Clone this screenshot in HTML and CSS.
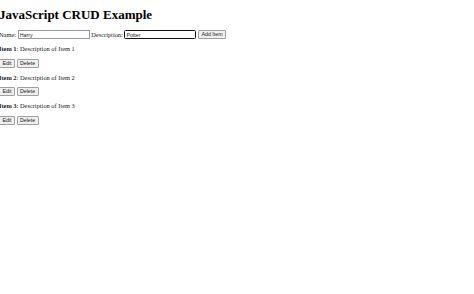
FILE: index.html
```html
<!DOCTYPE html>
<html>
<head>
<meta charset="utf-8">
<title>JavaScript CRUD Example</title>
<link rel="stylesheet" href="styles.css">
</head>
<body>
<h1 class="title">JavaScript CRUD Example</h1>
<div class="form-row">
  <label class="lbl" for="name">Name:</label>
  <input class="field" id="name" type="text" value="Harry">
  <label class="lbl" for="desc">Description:</label>
  <input class="field field-focus" id="desc" type="text" value="Potter">
  <button class="btn">Add Item</button>
</div>
<div class="items">
  <div class="item">
    <p class="item-text"><strong>Item 1</strong>: Description of Item 1</p>
    <div class="item-actions"><button class="btn">Edit</button><button class="btn">Delete</button></div>
  </div>
  <div class="item">
    <p class="item-text"><strong>Item 2</strong>: Description of Item 2</p>
    <div class="item-actions"><button class="btn">Edit</button><button class="btn">Delete</button></div>
  </div>
  <div class="item">
    <p class="item-text"><strong>Item 3</strong>: Description of Item 3</p>
    <div class="item-actions"><button class="btn">Edit</button><button class="btn">Delete</button></div>
  </div>
</div>
</body>
</html>
```
FILE: styles.css
```css
html, body {
  background: #ffffff;
}
body {
  margin: 0 0 0 -1px;
  font-family: "Liberation Serif", "Times New Roman", serif;
  font-size: 6.4px;
  color: #1a1a1a;
}
.title {
  font-size: 13px;
  font-weight: bold;
  margin: 8px 0 8px 0;
  line-height: 14.4px;
  color: #000;
}
.form-row {
  display: flex;
  align-items: center;
  gap: 1.6px;
  height: 9px;
}
.lbl {
  font-size: 6.4px;
}
.field {
  box-sizing: border-box;
  width: 72px;
  height: 9px;
  border: 1px solid #9a9a9a;
  padding: 0 1px;
  margin: 0;
  font-family: "Liberation Sans", Arial, sans-serif;
  font-size: 5.3px;
  color: #222;
  background: #fff;
  outline: none;
}
.field-focus {
  border: 1px solid #101010;
  border-radius: 1.5px;
}
.btn {
  box-sizing: border-box;
  height: 9px;
  padding: 0 2.4px;
  margin: 0;
  border: 1px solid #a0a0a0;
  border-radius: 1px;
  background: #efefef;
  font-family: "Liberation Sans", Arial, sans-serif;
  font-size: 5.3px;
  color: #222;
  line-height: 7px;
}
.item-text {
  margin: 6px 0;
  line-height: 7.4px;
}
.item-actions {
  display: flex;
  gap: 1.6px;
}
```
